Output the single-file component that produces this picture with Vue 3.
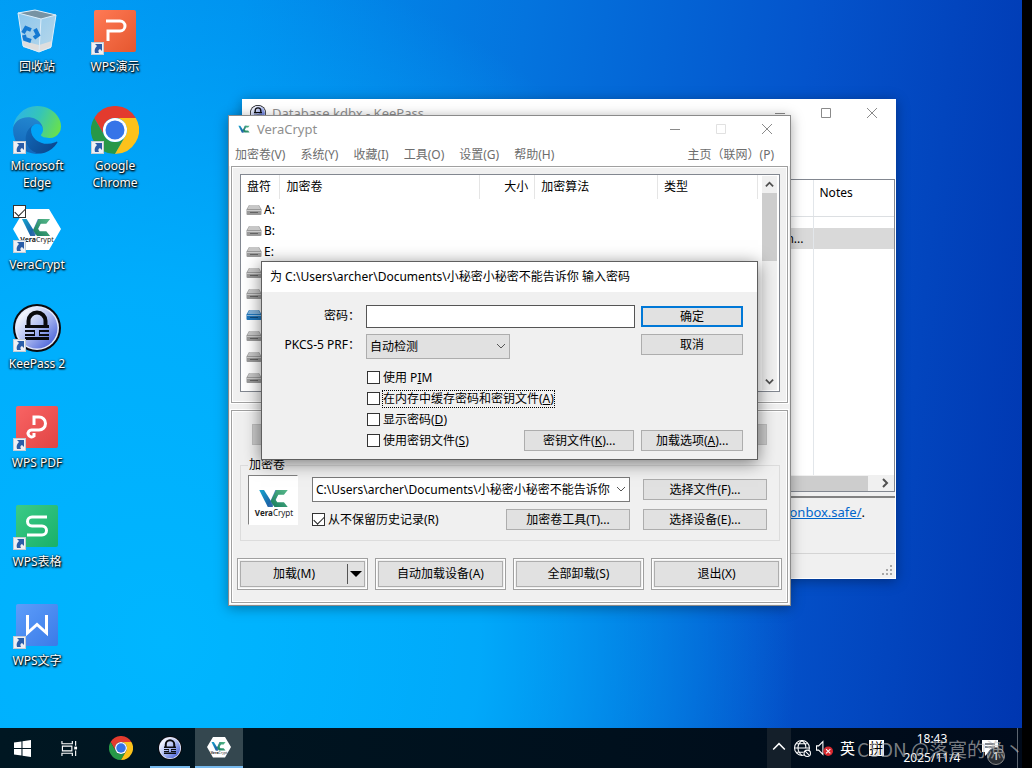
<!-- src/App.vue -->
<template>
  <!-- shared icon shapes -->
  <svg class="sprites" aria-hidden="true">
    <defs>
      <linearGradient id="g-orange" x1="0" y1="0" x2="1" y2="1">
        <stop offset="0" stop-color="#ff7a55" /><stop offset="1" stop-color="#e5572f" />
      </linearGradient>
      <linearGradient id="g-red" x1="0" y1="0" x2="1" y2="1">
        <stop offset="0" stop-color="#f96464" /><stop offset="1" stop-color="#e04444" />
      </linearGradient>
      <linearGradient id="g-green" x1="0" y1="0" x2="1" y2="1">
        <stop offset="0" stop-color="#3bcb86" /><stop offset="1" stop-color="#19b06a" />
      </linearGradient>
      <linearGradient id="g-blue" x1="0" y1="0" x2="1" y2="1">
        <stop offset="0" stop-color="#5d9dfa" /><stop offset="1" stop-color="#3a7be8" />
      </linearGradient>
      <linearGradient id="g-keepass" x1="0" y1="0" x2="1" y2="1">
        <stop offset="0.1" stop-color="#ffffff" /><stop offset="0.5" stop-color="#aebcf2" /><stop offset="0.9" stop-color="#4a63d8" />
      </linearGradient>
      <linearGradient id="g-bin" x1="0" y1="0" x2="1" y2="1">
        <stop offset="0" stop-color="#8cc6ec" /><stop offset="1" stop-color="#b9d8ea" />
      </linearGradient>
      <linearGradient id="g-edge-low" x1="0.2" y1="0" x2="1" y2="0.6">
        <stop offset="0" stop-color="#1268b8" /><stop offset="1" stop-color="#0c4a91" />
      </linearGradient>
      <linearGradient id="g-edge-mid" x1="0.6" y1="0" x2="0.4" y2="1">
        <stop offset="0" stop-color="#2488d0" /><stop offset="1" stop-color="#1166bb" />
      </linearGradient>
      <linearGradient id="g-edge-top" x1="0" y1="0.3" x2="1" y2="0.6">
        <stop offset="0" stop-color="#2db3e8" /><stop offset="0.5" stop-color="#35c5b8" /><stop offset="1" stop-color="#68e04e" />
      </linearGradient>
      <linearGradient id="g-vee" x1="0" y1="0" x2="1" y2="1">
        <stop offset="0" stop-color="#16a5cf" /><stop offset="1" stop-color="#1b519c" />
      </linearGradient>
      <linearGradient id="g-cee" x1="1" y1="0" x2="0" y2="1">
        <stop offset="0" stop-color="#58b98c" /><stop offset="1" stop-color="#167b5a" />
      </linearGradient>
    </defs>

    <symbol id="recycle" viewBox="0 0 48 48">
      <path d="M5 6 22 3l21 5-5 32-12 5-16-6z" fill="url(#g-bin)" />
      <path d="M6 6 22 3l21 5-15 4z" fill="#7793a3" />
      <path d="m10 34 16 4v7L10 40zM26 38l13-4-1 7-12 4z" fill="#dedede" />
      <path d="M5 6l23 6 15-4M28 12l-2 33M5 6l5 33 16 6 12-5 5-32-21-5z" fill="none" stroke="#dceefa" />
      <g fill="none" stroke="#1479d2" stroke-width="4">
        <path d="m10 26 3-5 5 2M22 22l3 6-4 3M18 34l-6-2-1-4" />
      </g>
    </symbol>

    <symbol id="wps-p" viewBox="0 0 48 48">
      <rect x="3" y="3" width="42" height="42" rx="2" fill="url(#g-orange)" />
      <path d="M15 14h14a5 5 0 0 1 0 10H17v10" fill="none" stroke="#fff" stroke-width="3" />
    </symbol>

    <symbol id="wps-pdf" viewBox="0 0 48 48">
      <rect x="3" y="3" width="42" height="42" rx="2" fill="url(#g-red)" />
      <path d="M21 22v-8h5a6.500 6.500 0 0 1 0 13h-7a3.500 3.500 0 1 0 2 6v-3" fill="none" stroke="#fff" stroke-width="3" />
    </symbol>

    <symbol id="wps-s" viewBox="0 0 48 48">
      <rect x="3" y="3" width="42" height="42" rx="2" fill="url(#g-green)" />
      <path d="M34 15H19a4 4 0 0 0 0 9h10a4 4 0 0 1 0 9H14" fill="none" stroke="#fff" stroke-width="3" />
    </symbol>

    <symbol id="wps-w" viewBox="0 0 48 48">
      <rect x="3" y="3" width="42" height="42" rx="2" fill="url(#g-blue)" />
      <path d="M14.500 14v18L24 23.500 33.500 32V14" fill="none" stroke="#fff" stroke-width="3" />
    </symbol>

    <symbol id="edge" viewBox="0 0 256 256">
      <path fill="url(#g-edge-low)" transform="translate(-4.630 -4.920)" d="M235.680 195.460a93.730 93.730 0 0 1-10.540 4.710 101.870 101.870 0 0 1-35.900 6.460c-47.320 0-88.540-32.550-88.540-74.320A31.480 31.480 0 0 1 117.130 105c-42.800 1.800-53.800 46.400-53.800 72.530 0 73.880 68.090 81.370 82.760 81.370 7.910 0 19.840-2.300 27-4.560l1.310-.44A128.340 128.340 0 0 0 241 201.100a4 4 0 0 0-5.320-5.640z" />
      <path fill="url(#g-edge-mid)" d="M105.730 241.420A79.200 79.200 0 0 1 83 220.080a80.720 80.720 0 0 1 29.530-120c3.120-1.470 8.450-4.130 15.540-4a32.350 32.350 0 0 1 25.690 13 31.880 31.880 0 0 1 6.360 18.660c0-.21 24.460-79.600-80-79.600-43.900 0-80 41.660-80 78.210a130.150 130.150 0 0 0 12.110 56 128 128 0 0 0 156.380 67.110 75.550 75.550 0 0 1-62.780-8z" />
      <path fill="url(#g-edge-top)" d="M152.330 148.860c-.81 1.050-3.300 2.500-3.300 5.660 0 2.610 1.700 5.120 4.720 7.230 14.380 10 41.490 8.680 41.560 8.680a59.560 59.560 0 0 0 30.270-8.350A61.380 61.380 0 0 0 256 109.130c.26-22.410-8-37.310-11.340-43.910C223.460 23.760 177.720 0 128 0A128 128 0 0 0 0 126.200c.48-36.540 36.800-66.050 80-66.050 3.500 0 23.460.34 42 10.070 16.340 8.580 24.900 18.940 30.850 29.210 6.180 10.670 7.280 24.150 7.280 29.520s-2.740 13.330-7.800 19.910z" />
    </symbol>

    <symbol id="chrome" viewBox="0 0 48 48">
      <path fill="#e33b2e" d="M24 12h20.800A24 24 0 0 0 3.200 12l10.400 18A12 12 0 0 1 24 12z" />
      <path fill="#279847" d="M3.200 12l10.400 18a12 12 0 0 0 20.800 0L24 48A24 24 0 0 1 3.200 12z" />
      <path fill="#fcc21b" d="M44.800 12A24 24 0 0 1 24 48l10.400-18A12 12 0 0 0 24 12z" />
      <circle cx="24" cy="24" r="12" fill="#fff" />
      <circle cx="24" cy="24" r="9.500" fill="#3574e8" />
    </symbol>

    <symbol id="keepass" viewBox="0 0 48 48">
      <circle cx="24" cy="24" r="24" fill="#0a0a0e" />
      <circle cx="24" cy="24" r="22" fill="#e4e9fb" />
      <circle cx="24" cy="24" r="20.500" fill="url(#g-keepass)" />
      <path d="M15.500 22v-5a8.500 8.500 0 0 1 17 0v5" fill="none" stroke="#0a0a0e" stroke-width="4" />
      <path d="M12 21h24v3H12zM12 26h10v2H12zM26 26h10v2H26zM12 30h10v2H12zM26 30h10v2H26zM12 33h24v3H12zM21 26h1v6h-1zM26 26h1v6h-1z" fill="#0a0a0e" />
    </symbol>

    <symbol id="vc-mark" viewBox="0 0 32 20">
      <path fill="url(#g-vee)" d="M1 1h5l7 11 2 7h-5z" />
      <path fill="#2f6cab" d="M10 19 18 1h5l-8 18z" opacity=".85" />
      <path fill="url(#g-cee)" d="M31 1H19l-6 12 4 6h14l-4-5h-7l-2-3 3-5h6z" />
    </symbol>

    <symbol id="veracrypt" viewBox="0 0 48 48">
      <path d="M12 4h24l12 20-12 21H12L0 24z" fill="#fff" />
      <use href="#vc-mark" x="8" y="13" width="30" height="19" />
      <text x="24" y="37" text-anchor="middle" class="vc-word"><tspan font-weight="700">Vera</tspan>Crypt</text>
    </symbol>

    <symbol id="shortcut" viewBox="0 0 13 13">
      <rect width="13" height="13" fill="#eef0f4" />
      <rect x=".5" y=".5" width="12" height="12" fill="none" stroke="#c5cdd5" />
      <path d="M4 2h7v7L9 7c-2 1-2 2-1 4H4C3 8 4 6 6 4z" fill="#2a5da8" />
    </symbol>

    <symbol id="drive" viewBox="0 0 16 12">
      <path d="M3 1h10l2.500 4.500V10a1 1 0 0 1-1 1h-13a1 1 0 0 1-1-1V5.500z" fill="currentColor" />
      <path d="M3.500 1h9l2 4h-13z" fill="#fff" opacity=".45" />
      <path d="M1 6h14v1H1z" fill="#fff" opacity=".5" />
      <path d="M4 8h8v1H4z" fill="#000" opacity=".35" />
    </symbol>
  </svg>

  <div class="screen">
    <main class="desktop">
      <nav class="shortcuts" aria-label="桌面">
        <a v-for="item in shortcuts" :key="item.icon" href="#" class="shortcut" :class="item.icon">
          <span class="picture">
            <svg class="icon"><use :href="'#' + item.icon" /></svg>
            <svg v-if="item.icon !== 'recycle'" class="arrow"><use href="#shortcut" /></svg>
            <input v-if="item.checked" type="checkbox" class="check pick" :aria-label="item.label" checked />
          </span>
          <span class="label">{{ item.label }}</span>
        </a>
      </nav>

      <!-- KeePass -->
      <section class="window keepass-window">
        <header class="titlebar">
          <svg class="app-icon"><use href="#keepass" /></svg>
          <span class="title">Database.kdbx - KeePass</span>
          <div class="controls">
            <button aria-label="最小化"><svg viewBox="0 0 12 12"><path d="M1 6.500h10" /></svg></button>
            <button aria-label="最大化"><svg viewBox="0 0 12 12"><path d="M1.500 1.500h9v9h-9z" /></svg></button>
            <button aria-label="关闭"><svg viewBox="0 0 12 12"><path d="m1 1 10 10M11 1 1 11" /></svg></button>
          </div>
        </header>
        <div class="toolbar"></div>
        <div class="entries">
          <table>
            <thead><tr><th></th><th>Notes</th></tr></thead>
            <tbody>
              <tr class="spacer"><td></td><td></td></tr>
              <tr class="selected"><td>n...</td><td></td></tr>
              <tr><td></td><td></td></tr>
            </tbody>
          </table>
          <div class="h-scroll">
            <span class="h-thumb"></span>
            <svg viewBox="0 0 10 10"><path d="m3 1 4 4-4 4" /></svg>
          </div>
        </div>
        <div class="details"><a href="#">ronbox.safe/</a>.</div>
        <footer class="statusbar">
          <svg viewBox="0 0 12 12"><path d="M9 1h2v2H9zM9 5h2v2H9zM9 9h2v2H9zM5 5h2v2H5zM5 9h2v2H5zM1 9h2v2H1z" /></svg>
        </footer>
      </section>

      <!-- VeraCrypt -->
      <section class="window vera-window">
        <header class="titlebar">
          <svg class="app-icon small"><use href="#vc-mark" /></svg>
          <span class="title">VeraCrypt</span>
          <div class="controls">
            <button aria-label="最小化"><svg viewBox="0 0 12 12"><path d="M1 6.500h10" /></svg></button>
            <button aria-label="最大化" disabled><svg viewBox="0 0 12 12"><path d="M1.500 1.500h9v9h-9z" /></svg></button>
            <button aria-label="关闭"><svg viewBox="0 0 12 12"><path d="m1 1 10 10M11 1 1 11" /></svg></button>
          </div>
        </header>
        <nav class="menubar">
          <button v-for="entry in menu" :key="entry">{{ entry }}</button>
          <button class="home">主页（联网）(P)</button>
        </nav>

        <div class="panel volumes">
          <div class="list">
            <table>
              <thead>
                <tr>
                  <th class="c-drive">盘符</th>
                  <th class="c-volume">加密卷</th>
                  <th class="c-size">大小</th>
                  <th class="c-algo">加密算法</th>
                  <th class="c-type">类型</th>
                </tr>
              </thead>
              <tbody>
                <tr v-for="(drive, i) in drives" :key="i">
                  <td colspan="5">
                    <div class="drive" :class="{ active: drive.active }">
                      <svg><use href="#drive" /></svg>{{ drive.letter }}
                    </div>
                  </td>
                </tr>
              </tbody>
            </table>
            <div class="v-scroll">
              <svg viewBox="0 0 10 10"><path d="m1 7 4-4 4 4" /></svg>
              <span class="v-thumb"></span>
              <svg viewBox="0 0 10 10"><path d="m1 3 4 4 4-4" /></svg>
            </div>
          </div>
        </div>

        <div class="panel actions">
          <div class="covered"></div>
          <fieldset>
            <legend>加密卷</legend>
            <div class="volume">
              <div class="brand">
                <svg viewBox="0 0 48 48">
                  <use href="#vc-mark" x="9" y="13" width="31" height="19" />
                  <text x="25" y="40" text-anchor="middle" class="brand-word"><tspan font-weight="700">Vera</tspan>Crypt</text>
                </svg>
              </div>
              <div class="volume-form">
                <div class="select path">
                  <select v-model="volumePath" aria-label="加密卷">
                    <option>{{ volumePath }}</option>
                  </select>
                  <svg viewBox="0 0 10 10"><path d="m1 3 4 4 4-4" /></svg>
                </div>
                <button class="btn">选择文件(F)...</button>
                <div class="history">
                  <label class="tick"><input type="checkbox" class="check" v-model="noHistory" /><span>从不保留历史记录(R)</span></label>
                  <button class="btn">加密卷工具(T)...</button>
                </div>
                <button class="btn">选择设备(E)...</button>
              </div>
            </div>
          </fieldset>
          <div class="main-buttons">
            <div class="frame split">
              <button class="btn">加载(M)</button>
              <button class="btn drop" aria-label="加载选项"><svg viewBox="0 0 12 6"><path d="M0 0h12L6 6z" /></svg></button>
            </div>
            <div class="frame"><button class="btn">自动加载设备(A)</button></div>
            <div class="frame"><button class="btn">全部卸载(S)</button></div>
            <div class="frame"><button class="btn">退出(X)</button></div>
          </div>
        </div>
      </section>

      <!-- password prompt -->
      <section class="window dialog" role="dialog">
        <header>为 {{ volumePath }} 输入密码</header>
        <form @submit.prevent>
          <div class="fields">
            <label for="password">密码：</label>
            <input id="password" v-model="password" type="password" />
            <button class="btn primary">确定</button>
            <label for="prf">PKCS-5 PRF：</label>
            <div class="select prf">
              <select id="prf" v-model="prf"><option>自动检测</option></select>
              <svg viewBox="0 0 10 10"><path d="m1 3 4 4 4-4" /></svg>
            </div>
            <button class="btn" type="button">取消</button>
          </div>
          <div class="options">
            <div class="ticks">
              <label v-for="opt in options" :key="opt.key" class="tick" :class="{ focused: opt.focused }">
                <input type="checkbox" class="check" v-model="opt.on" />
                <span>{{ opt.before }}<u>{{ opt.key }}</u>{{ opt.after }}</span>
              </label>
            </div>
            <button class="btn keyfiles" type="button">密钥文件(<u>K</u>)...</button>
            <button class="btn" type="button">加载选项(<u>A</u>)...</button>
          </div>
        </form>
      </section>
    </main>

    <footer class="taskbar">
      <button class="task start" aria-label="开始">
        <svg viewBox="0 0 16 16"><path d="M0 2.300 7 1.300v6.200H0zM8 1.200 16 0v7.500H8zM0 8.500h7v6.200l-7-1zM8 8.500h8V16l-8-1.200z" fill="#fff" /></svg>
      </button>
      <button class="task" aria-label="任务视图">
        <svg viewBox="0 0 18 18" fill="none" stroke="#fff" stroke-width="1.200"><path d="M1 1v3h11V1M1 17v-3h11v3M1.500 6.500h10v5h-10zM15.500 1v5M15.500 11v6" /><path d="M14 7h3v3h-3z" fill="#fff" stroke="none" /></svg>
      </button>
      <button class="task app" aria-label="Chrome"><svg><use href="#chrome" /></svg></button>
      <button class="task app running" aria-label="KeePass"><svg><use href="#keepass" /></svg></button>
      <button class="task app current" aria-label="VeraCrypt"><svg><use href="#veracrypt" /></svg></button>

      <div class="tray">
        <button class="more" aria-label="更多">
          <svg viewBox="0 0 12 12"><path d="m1 9 5-5 5 5" fill="none" stroke="#fff" stroke-width="1.300" /></svg>
        </button>
        <svg class="net" viewBox="0 0 16 16" fill="none" stroke="#fff">
          <circle cx="7.500" cy="7.500" r="7" /><path d="M.5 7.500h14M2 3.500h11M2 11.500h7M7.500.5c-5 4-5 10 0 14M7.500.5c2.500 2 4 5 3.500 7" />
          <circle cx="12.500" cy="12.500" r="3" fill="#021021" /><path d="m10.500 10.500 4 4" />
        </svg>
        <svg class="sound" viewBox="0 0 16 16">
          <path d="M.5 5.500h2l4-4v12l-4-4h-2z" fill="none" stroke="#fff" />
          <circle cx="11.500" cy="10.500" r="4.500" fill="#d9282f" /><path d="m9.500 8.500 4 4m0-4-4 4" stroke="#fff" />
        </svg>
        <span class="lang">英</span>
        <span class="ime">拼</span>
        <div class="clock"><time>18:43</time><time>2025/11/4</time></div>
        <div class="notice">
          <svg viewBox="0 0 18 18"><path d="M1 1h16v12H8l-4 4v-4H1z" fill="#fff" /><path d="M4 5h10M4 8h10" stroke="#0a1220" /></svg>
          <span class="count">1</span>
        </div>
        <span class="peek"></span>
      </div>
    </footer>
    <p class="watermark">CSDN @落寞的漁丶</p>
  </div>
</template>

<script setup>
import { ref } from 'vue';

// ─── DESKTOP ──────────────────────────────────────────────────────────────────
const shortcuts = [
  { icon: 'recycle', label: '回收站' },
  { icon: 'edge', label: 'Microsoft Edge' },
  { icon: 'veracrypt', label: 'VeraCrypt', checked: true },
  { icon: 'keepass', label: 'KeePass 2' },
  { icon: 'wps-pdf', label: 'WPS PDF' },
  { icon: 'wps-s', label: 'WPS表格' },
  { icon: 'wps-w', label: 'WPS文字' },
  { icon: 'wps-p', label: 'WPS演示' },
  { icon: 'chrome', label: 'Google Chrome' }
];

// ─── VERACRYPT ────────────────────────────────────────────────────────────────
const menu = ['加密卷(V)', '系统(Y)', '收藏(I)', '工具(O)', '设置(G)', '帮助(H)'];

const drives = [
  { letter: 'A:' },
  { letter: 'B:' },
  { letter: 'E:' },
  {},
  {},
  { active: true },
  {},
  {},
  {}
];

const volumePath = ref('C:\\Users\\archer\\Documents\\小秘密小秘密不能告诉你');
const noHistory = ref(true);

// ─── PASSWORD DIALOG ──────────────────────────────────────────────────────────
const password = ref('');
const prf = ref('自动检测');
const options = ref([
  { before: '使用 P', key: 'I', after: 'M', on: false },
  { before: '在内存中缓存密码和密钥文件(', key: 'A', after: ')', on: false, focused: true },
  { before: '显示密码(', key: 'D', after: ')', on: false },
  { before: '使用密钥文件(', key: 'S', after: ')', on: false }
]);
</script>

<style>
body {
  background: #000;
  overflow: hidden;
}
</style>

<style scoped>
* {
  box-sizing: border-box;
}

.sprites {
  position: absolute;
  width: 0;
  height: 0;
}

.vc-word {
  font: 7px "Noto Sans", sans-serif;
  fill: #222;
}

.brand-word {
  font: 8px "Noto Sans", sans-serif;
  fill: #222;
}

button,
input,
select {
  font: inherit;
  color: inherit;
  margin: 0;
  padding: 0;
  border: 0;
  border-radius: 0;
  background: none;
}

/* ─── SCREEN ─────────────────────────────────────────────────────────────────── */
.screen {
  position: relative;
  display: flex;
  flex-direction: column;
  height: 100vh;
  padding-right: 10px;
  background: #000;
  font: 12px/16px "Noto Sans", "Noto Sans CJK SC", sans-serif;
  color: #000;
}

.desktop {
  position: relative;
  flex: 1;
  min-height: 0;
  overflow: hidden;
  background:
    radial-gradient(ellipse 62% 95% at 16% 88%, #00b6ff 0%, rgba(0, 178, 255, 0.85) 50%, rgba(0, 150, 245, 0) 100%),
    linear-gradient(96deg, #009cf4 0%, #0090ee 22%, #0474de 48%, #0454cc 74%, #0036b0 100%);
}

/* ─── DESKTOP SHORTCUTS ──────────────────────────────────────────────────────── */
.shortcuts {
  display: grid;
  grid-auto-flow: column;
  grid-template-rows: repeat(7, 99px);
  grid-auto-columns: 74px;
  column-gap: 4px;
  padding-top: 7px;
}

.shortcut {
  display: flex;
  flex-direction: column;
  align-items: center;
  gap: 3px;
  color: #fff;
  text-decoration: none;
}

.picture {
  position: relative;
  width: 48px;
  height: 48px;
}

.icon {
  width: 48px;
  height: 48px;
}

.arrow {
  position: absolute;
  left: 0;
  bottom: 0;
  width: 13px;
  height: 13px;
}

.pick {
  position: absolute;
  left: 0;
  top: 0;
}

.label {
  line-height: 17px;
  text-align: center;
  text-shadow: 1px 1px 2px #000, 0 1px 2px #000, 0 0 2px rgba(0, 0, 0, 0.7);
}

/* ─── WINDOWS ────────────────────────────────────────────────────────────────── */
.window {
  position: absolute;
  display: flex;
  flex-direction: column;
  background: #f0f0f0;
  border: 1px solid #8a8a8a;
  box-shadow: 0 2px 12px rgba(0, 0, 0, 0.35);
}

.titlebar {
  display: flex;
  align-items: center;
  height: 26px;
  padding-left: 9px;
  background: #fff;
  color: #8f8f8f;
}

.app-icon {
  width: 16px;
  height: 16px;
}

.app-icon.small {
  width: 12px;
  height: 8px;
}

.title {
  margin-left: 7px;
  font-size: 13px;
}

.controls {
  display: flex;
  margin-left: auto;
}

.controls button {
  display: flex;
  justify-content: center;
  align-items: center;
  width: 46px;
  height: 26px;
}

.controls svg {
  width: 12px;
  height: 12px;
  fill: none;
  stroke: #8a8a8a;
}

.controls button:disabled {
  opacity: 0.25;
}

.btn {
  height: 21px;
  border: 1px solid #adadad;
  background: #e1e1e1;
  text-align: center;
  white-space: nowrap;
}

.btn.primary {
  border: 2px solid #0078d7;
}

.check {
  appearance: none;
  display: grid;
  flex: none;
  width: 13px;
  height: 13px;
  border: 1px solid #333;
  background: #fff;
}

.check:checked::before {
  content: "";
  width: 9px;
  height: 5px;
  margin: 2px 1px;
  border: solid #222;
  border-width: 0 0 1px 1px;
  transform: rotate(-45deg);
}

.tick {
  display: flex;
  align-items: center;
  gap: 3px;
}

.select {
  position: relative;
}

.select select {
  appearance: none;
  width: 100%;
  height: 100%;
  padding: 0 19px 0 3px;
  border: 1px solid #adadad;
  background: #e1e1e1;
}

.select svg {
  position: absolute;
  right: 4px;
  top: 7px;
  width: 10px;
  height: 10px;
  fill: none;
  stroke: #555;
  pointer-events: none;
}

/* ─── KEEPASS ────────────────────────────────────────────────────────────────── */
.keepass-window {
  left: 242px;
  top: 99px;
  width: 654px;
  border-color: #fff;
}

.keepass-window .titlebar {
  padding-left: 7px;
}

.keepass-window .title {
  margin-left: 6px;
}

.toolbar {
  height: 53px;
  background: #fff;
}

.entries {
  border: 1px solid #828790;
  background: #fff;
}

.entries table {
  width: 100%;
  height: 295px;
  border-collapse: collapse;
}

.entries th,
.entries td {
  padding: 0 6px;
  text-align: left;
  font-weight: 400;
}

.entries th:first-child,
.entries td:first-child {
  width: 569px;
  padding-right: 9px;
  border-right: 1px solid #e2e6ea;
  text-align: right;
}

.entries thead th {
  height: 36px;
  padding-bottom: 10px;
  border-bottom: 1px solid #dcdfe2;
}

.entries .spacer td {
  height: 12px;
}

.entries .selected td {
  height: 21px;
  background: #d9d9d9;
}

.h-scroll {
  display: flex;
  align-items: center;
  height: 16px;
  background: #f0f0f0;
}

.h-thumb {
  flex: 1;
  height: 15px;
  background: #cdcdcd;
}

.h-scroll svg {
  width: 10px;
  height: 10px;
  margin: 0 4px 0 12px;
  fill: none;
  stroke: #505050;
  stroke-width: 2;
}

.details {
  height: 58px;
  margin-top: 4px;
  padding: 6px 30px 0 0;
  border-top: 2px solid #828282;
  border-bottom: 1px solid #d4d4d4;
  text-align: right;
  font-size: 13px;
}

.details a {
  color: #0066cc;
}

.statusbar {
  display: flex;
  justify-content: flex-end;
  align-items: flex-end;
  height: 24px;
  padding: 2px;
}

.statusbar svg {
  width: 12px;
  height: 12px;
  fill: #a8a8a8;
}

/* ─── VERACRYPT ──────────────────────────────────────────────────────────────── */
.vera-window {
  left: 228px;
  top: 115px;
  width: 563px;
  padding-bottom: 2px;
}

.menubar {
  display: flex;
  gap: 15px;
  height: 24px;
  padding: 2px 16px 0 6px;
  background: #fff;
  color: #6d6d6d;
}

.menubar .home {
  margin-left: auto;
}

.panel {
  margin: 0 2px;
  border: 1px solid #a0a0a0;
  box-shadow: 0 0 0 1px #fff, inset 0 0 0 1px #fff;
}

.volumes {
  padding: 7px 7px 10px 8px;
}

.list {
  display: flex;
  height: 218px;
  border: 1px solid #828790;
  background: #fff;
}

.list table {
  flex: 1;
  height: 214px;
  border-collapse: collapse;
  table-layout: fixed;
}

.list th {
  height: 24px;
  padding: 0 6px;
  border-right: 1px solid #e5e5e5;
  font-weight: 400;
  text-align: left;
}

.list .c-drive {
  width: 39px;
  padding-right: 0;
}

.list .c-volume {
  width: 200px;
}

.list .c-size {
  width: 55px;
  text-align: right;
}

.list .c-algo {
  width: 123px;
}

.list .c-type {
  width: 100px;
}

.list td {
  height: 21px;
  padding: 0 5px;
}

.drive {
  display: flex;
  align-items: center;
  gap: 2px;
}

.drive svg {
  width: 16px;
  height: 12px;
  color: #999;
}

.drive.active svg {
  color: #1e76bd;
}

.v-scroll {
  display: flex;
  flex-direction: column;
  align-items: center;
  width: 15px;
  margin: 1px 2px 1px 4px;
  background: #f0f0f0;
}

.v-scroll svg {
  width: 9px;
  height: 9px;
  margin: 4px 0;
  fill: none;
  stroke: #505050;
  stroke-width: 2;
}

.v-thumb {
  width: 100%;
  height: 68px;
  margin-bottom: auto;
  background: #cdcdcd;
}

.actions {
  margin-top: 7px;
  padding: 13px 5px 12px;
}

.covered {
  height: 21px;
  margin: 0 15px 12px;
  border: 1px solid #bfbfbf;
  background: #cccccc;
}

fieldset {
  min-width: 0;
  margin: 0 2px 17px 3px;
  padding: 2px 12px 10px 7px;
  border: 1px solid #dcdcdc;
}

legend {
  padding: 0 1px;
}

.volume {
  display: flex;
  gap: 14px;
}

.brand {
  width: 50px;
  height: 50px;
  border: 1px solid #fff;
  border-top-color: #808080;
  border-left-color: #808080;
  background: #fff;
}

.brand svg {
  display: block;
  width: 48px;
  height: 48px;
}

.volume-form {
  display: grid;
  flex: 1;
  grid-template-columns: 1fr 124px;
  gap: 7px 13px;
  align-items: center;
  margin-top: 2px;
}

.path {
  height: 25px;
}

.path select {
  border-color: #7a7a7a;
  background: #fff;
}

.history {
  display: flex;
  align-items: center;
  justify-content: space-between;
}

.history .btn {
  width: 124px;
}

.main-buttons {
  display: grid;
  grid-template-columns: repeat(4, 1fr);
  gap: 7px;
}

.frame {
  display: flex;
  height: 32px;
  padding: 2px;
  border: 1px solid #a0a0a0;
  box-shadow: inset 0 0 0 1px #fff;
}

.frame .btn {
  flex: 1;
  height: 100%;
}

.split .btn:first-child {
  border-right: 0;
}

.frame .drop {
  position: relative;
  flex: 0 0 18px;
  border-left: 0;
}

.frame .drop::before {
  content: "";
  position: absolute;
  left: 0;
  top: 2px;
  bottom: 2px;
  border-left: 1px solid #555;
}

.drop svg {
  display: block;
  width: 12px;
  height: 6px;
  margin: 0 auto;
}

/* ─── PASSWORD DIALOG ────────────────────────────────────────────────────────── */
.dialog {
  left: 261px;
  top: 261px;
  width: 497px;
  border-color: #5f5f5f;
  box-shadow: 0 3px 16px rgba(0, 0, 0, 0.5);
}

.dialog header {
  height: 30px;
  padding: 0 8px;
  background: #fff;
  line-height: 30px;
}

.dialog form {
  padding: 13px 14px 8px 0;
}

.fields {
  display: grid;
  grid-template-columns: 104px 1fr 102px;
  gap: 6px 0;
}

.fields label {
  line-height: 22px;
  text-align: right;
  padding-right: 6px;
}

.fields input {
  height: 23px;
  margin-right: 6px;
  padding: 0 3px;
  border: 1px solid #555;
  background: #fff;
}

.fields .primary {
  margin-top: 1px;
}

.prf {
  width: 144px;
  height: 25px;
}

.options {
  display: flex;
  align-items: flex-end;
  gap: 7px;
  padding: 8px 0 0 105px;
}

.options .btn {
  width: 102px;
}

.options .keyfiles {
  width: 111px;
  margin-left: auto;
}

.ticks {
  display: grid;
  width: 150px;
  grid-auto-rows: 21px;
  white-space: nowrap;
}

.ticks u {
  text-underline-offset: 1px;
}

.focused span {
  outline: 1px dotted #000;
}

/* ─── TASKBAR ────────────────────────────────────────────────────────────────── */
.taskbar {
  display: flex;
  flex: none;
  height: 40px;
  background: linear-gradient(90deg, #001722, #00101d 60%, #000a1a);
  color: #fff;
}

.task {
  display: flex;
  justify-content: center;
  align-items: center;
  width: 49px;
}

.task.start {
  width: 45px;
}

.task svg {
  width: 17px;
  height: 17px;
}

.app {
  width: 48px;
  margin-left: 1px;
}

.task + .task.app:nth-child(3) {
  margin-left: 3px;
}

.app svg {
  width: 24px;
  height: 24px;
}

.running {
  background: linear-gradient(#76b9ed, #76b9ed) center bottom / 40px 2px no-repeat;
}

.current {
  border-bottom: 2px solid #76b9ed;
  background: #34474f;
}

.tray {
  display: flex;
  align-items: center;
  margin-left: auto;
}

.more {
  width: 24px;
  height: 40px;
  background: #141f2a;
}

.more svg {
  width: 14px;
  height: 14px;
}

.net {
  width: 17px;
  height: 17px;
  margin: 0 5px 0 3px;
}

.sound {
  width: 17px;
  height: 17px;
  margin-right: 7px;
}

.lang {
  font-size: 15px;
}

.ime {
  width: 15px;
  margin: 0 7px 0 14px;
  background: #fff;
  color: #000;
  font-size: 14px;
  text-align: center;
}

.clock {
  display: flex;
  flex-direction: column;
  align-items: center;
  width: 82px;
  line-height: 19px;
}

.notice {
  position: relative;
  width: 18px;
  height: 18px;
  margin: 0 18px 0 8px;
}

.count {
  position: absolute;
  left: 6px;
  top: 8px;
  width: 18px;
  height: 18px;
  border: 1px solid #888;
  border-radius: 50%;
  background: #2a2e34;
  font-size: 11px;
  text-align: center;
}

.peek {
  width: 5px;
  height: 40px;
  border-left: 1px solid #5c6570;
}

.watermark {
  position: absolute;
  right: 8px;
  bottom: 7px;
  margin: 0;
  font: 19px/24px "Noto Sans CJK SC", sans-serif;
  color: rgba(190, 190, 190, 0.65);
}
</style>
